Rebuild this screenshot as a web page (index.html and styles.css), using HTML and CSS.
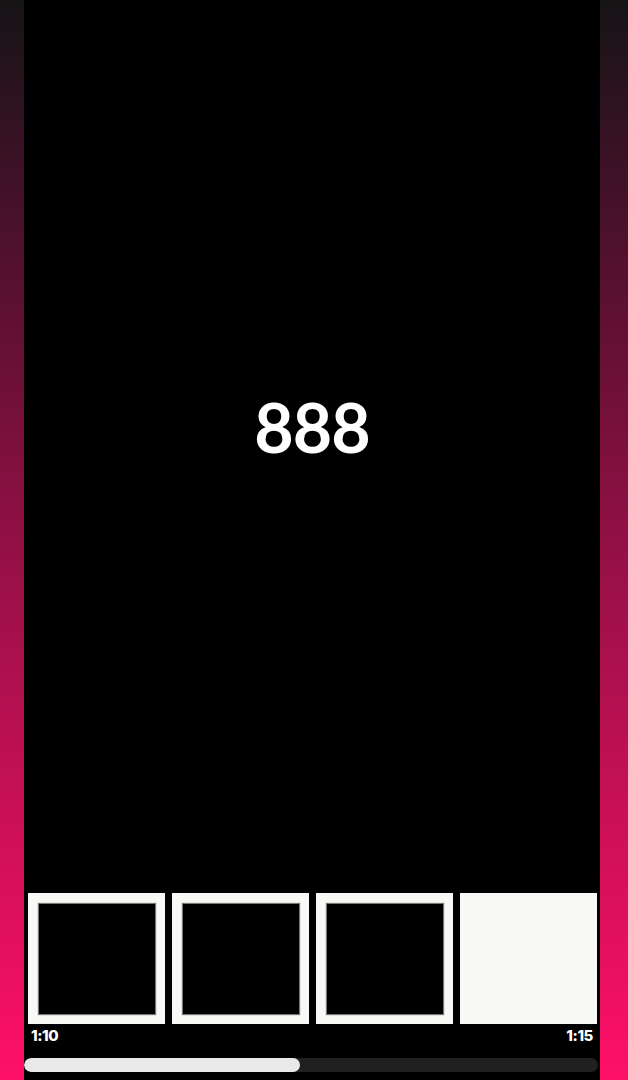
FILE: index.html
```html
<!DOCTYPE html>
<html>
<head>
<meta charset="utf-8">
<link rel="stylesheet" href="styles.css">
</head>
<body>
<div class="frame">
  <main class="player">
    <div class="stage"><span class="count">888</span></div>
    <div class="thumbs">
      <div class="thumb"><div class="thumb-inner"></div></div>
      <div class="thumb"><div class="thumb-inner"></div></div>
      <div class="thumb"><div class="thumb-inner"></div></div>
      <div class="thumb blank"></div>
    </div>
    <div class="times"><span>1:10</span><span>1:15</span></div>
    <div class="track"><div class="fill" style="width:48%"></div></div>
  </main>
</div>
</body>
</html>
```
FILE: styles.css
```css
html, body { margin: 0; padding: 0; }
body {
  width: 628px;
  height: 1080px;
  background: linear-gradient(to bottom, #161416 0%, #5c1032 28%, #a0104a 56%, #ff1068 100%);
  font-family: "Lato", "Inter", sans-serif;
  overflow: hidden;
}
.frame {
  display: flex;
  height: 1080px;
  padding: 0 28px 0 24px;
}
.player {
  flex: 1;
  background: #000;
  display: flex;
  flex-direction: column;
}
.stage {
  flex: 1;
  display: flex;
  align-items: center;
  justify-content: center;
  padding-bottom: 40px;
}
.count {
  color: #fff;
  font-family: "Lato", sans-serif;
  font-size: 68px;
  font-weight: 700;
  letter-spacing: -1px;
  line-height: 1;
}
.thumbs {
  display: flex;
  gap: 7px;
  padding: 0 3px 0 4px;
}
.thumb {
  width: 137px;
  height: 131px;
  background: #f8f9f6;
  padding: 11px 10px 10px 11px;
  box-sizing: border-box;
}
.thumb-inner {
  width: 100%;
  height: 100%;
  background: #000;
  box-shadow: 0 0 1px 1px #777;
}
.times {
  display: flex;
  justify-content: space-between;
  padding: 2px 7px 0 7px;
  height: 32px;
  color: #fff;
  font-family: "Inter", sans-serif;
  font-weight: 800;
  font-size: 15px;
  letter-spacing: -0.4px;
}
.track {
  height: 14px;
  margin: 0 2px 8px 0;
  border-radius: 7px;
  background: #202020;
  overflow: hidden;
}
.fill {
  height: 100%;
  border-radius: 7px;
  background: #e9e9e9;
}
```
